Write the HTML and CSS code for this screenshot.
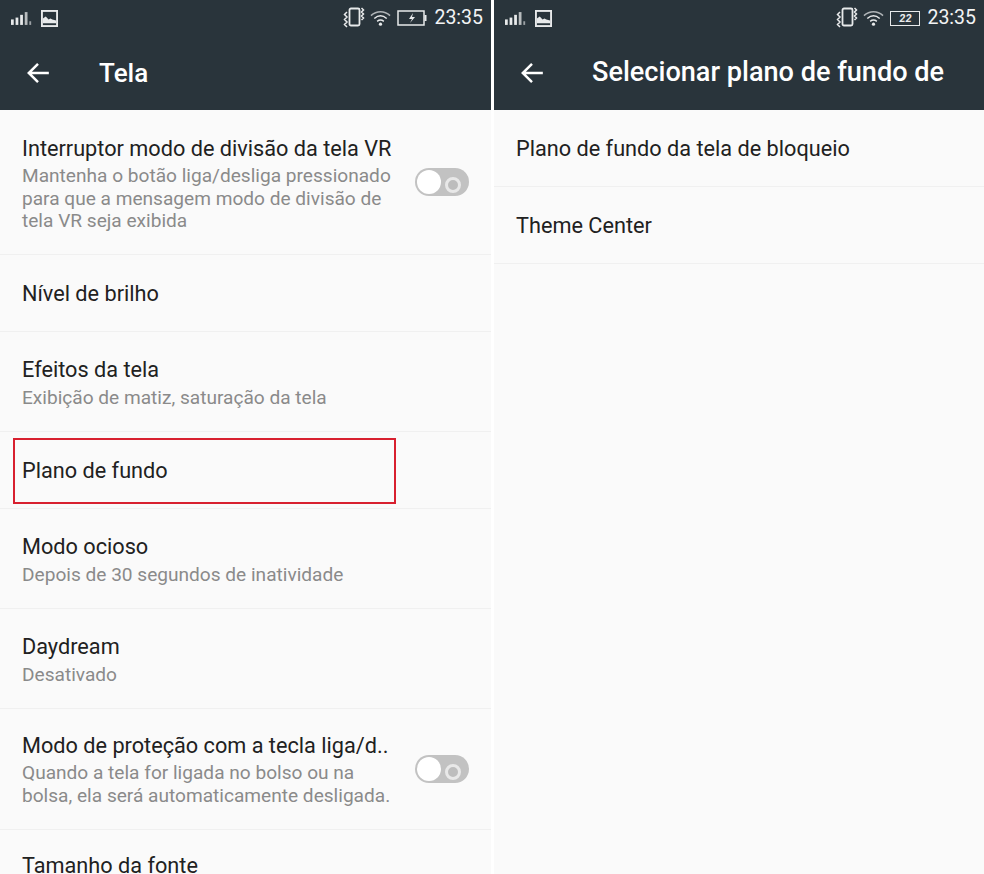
FILE: index.html
```html
<!DOCTYPE html>
<html lang="pt">
<head>
<meta charset="utf-8">
<title>Tela</title>
<link rel="stylesheet" href="styles.css">
</head>
<body>
<div class="screens">
  <section class="panel panel-left">
    <header class="appbar">
      <div class="status">
        <div class="status-left">
          <svg class="ic-signal" viewBox="0 0 24 14"><g fill="#e8eaeb"><rect x="0" y="8" width="3" height="6"/><rect x="5" y="6" width="3" height="8"/><rect x="10" y="3" width="3" height="11"/><rect x="15" y="0" width="3" height="14" opacity=".75"/><rect x="20" y="10" width="2" height="4" opacity=".6"/></g></svg>
          <svg class="ic-image" viewBox="0 0 18 18"><rect x="1" y="1" width="16" height="16" fill="none" stroke="#e8eaeb" stroke-width="2"/><path d="M2 14V9l3-2 3 3 2-1 2 1 4 1v3z" fill="#e8eaeb"/></svg>
        </div>
        <div class="status-right">
          <svg class="ic-vibrate" viewBox="0 0 22 22"><rect x="6.500" y="1.500" width="10" height="17" rx="1.500" fill="none" stroke="#e8eaeb" stroke-width="1.800"/><path d="M4 5L1.500 7.500 4 10l-2.500 2.500L4 15l-2.500 2.500L4 20M18.500 1l2 2-2 2 2 2-2 2 2 2-2 2" fill="none" stroke="#e8eaeb" stroke-width="1.500"/></svg>
          <svg class="ic-wifi" viewBox="0 0 22 18"><g fill="none" stroke="#e8eaeb" stroke-width="1.600"><path d="M1 6.500C7 1 15 1 21 6.500" opacity=".7"/><path d="M4.500 9.500c4-3.500 9-3.500 13 0"/><path d="M7.500 12.500c2-1.500 5-1.500 7 0"/></g><circle cx="11" cy="15.500" r="1.700" fill="#e8eaeb"/></svg>
          <svg class="ic-batt" viewBox="0 0 30 16"><rect x="1" y="1" width="26" height="14" fill="none" stroke="#e8eaeb" stroke-width="1.500"/><rect x="27.500" y="5" width="2" height="6" fill="#e8eaeb"/><path d="M16 3l-4 6h3l-2 4 5-6h-3l1-4z" fill="#e8eaeb"/></svg>
          <span class="clock">23:35</span>
        </div>
      </div>
      <div class="toolbar">
        <svg class="ic-back" viewBox="0 0 24 24"><path d="M22 12H4M12 3.500L3.500 12l8.500 8.500" fill="none" stroke="#fff" stroke-width="2.300"/></svg>
        <h1 class="title">Tela</h1>
      </div>
    </header>
    <div class="list">
      <div class="row row-vr">
        <div class="row-text">
          <div class="label">Interruptor modo de divisão da tela VR</div>
          <div class="sub">Mantenha o botão liga/desliga pressionado para que a mensagem modo de divisão de tela VR seja exibida</div>
        </div>
        <span class="switch"></span>
      </div>
      <div class="row row-single"><div class="label">Nível de brilho</div></div>
      <div class="row row-two">
        <div class="label">Efeitos da tela</div>
        <div class="sub">Exibição de matiz, saturação da tela</div>
      </div>
      <div class="row row-plano">
        <div class="label">Plano de fundo</div>
        <span class="highlight"></span>
      </div>
      <div class="row row-two">
        <div class="label">Modo ocioso</div>
        <div class="sub">Depois de 30 segundos de inatividade</div>
      </div>
      <div class="row row-two">
        <div class="label">Daydream</div>
        <div class="sub">Desativado</div>
      </div>
      <div class="row row-protect">
        <div class="row-text">
          <div class="label">Modo de proteção com a tecla liga/d..</div>
          <div class="sub">Quando a tela for ligada no bolso ou na bolsa, ela será automaticamente desligada.</div>
        </div>
        <span class="switch"></span>
      </div>
      <div class="row row-last"><div class="label">Tamanho da fonte</div></div>
    </div>
  </section>
  <section class="panel panel-right">
    <header class="appbar">
      <div class="status">
        <div class="status-left">
          <svg class="ic-signal" viewBox="0 0 24 14"><g fill="#e8eaeb"><rect x="0" y="8" width="3" height="6"/><rect x="5" y="6" width="3" height="8"/><rect x="10" y="3" width="3" height="11"/><rect x="15" y="0" width="3" height="14" opacity=".75"/><rect x="20" y="10" width="2" height="4" opacity=".6"/></g></svg>
          <svg class="ic-image" viewBox="0 0 18 18"><rect x="1" y="1" width="16" height="16" fill="none" stroke="#e8eaeb" stroke-width="2"/><path d="M2 14V9l3-2 3 3 2-1 2 1 4 1v3z" fill="#e8eaeb"/></svg>
        </div>
        <div class="status-right">
          <svg class="ic-vibrate" viewBox="0 0 22 22"><rect x="6.500" y="1.500" width="10" height="17" rx="1.500" fill="none" stroke="#e8eaeb" stroke-width="1.800"/><path d="M4 5L1.500 7.500 4 10l-2.500 2.500L4 15l-2.500 2.500L4 20M18.500 1l2 2-2 2 2 2-2 2 2 2-2 2" fill="none" stroke="#e8eaeb" stroke-width="1.500"/></svg>
          <svg class="ic-wifi" viewBox="0 0 22 18"><g fill="none" stroke="#e8eaeb" stroke-width="1.600"><path d="M1 6.500C7 1 15 1 21 6.500" opacity=".7"/><path d="M4.500 9.500c4-3.500 9-3.500 13 0"/><path d="M7.500 12.500c2-1.500 5-1.500 7 0"/></g><circle cx="11" cy="15.500" r="1.700" fill="#e8eaeb"/></svg>
          <span class="batt-num"><span class="batt-text">22</span></span>
          <span class="clock">23:35</span>
        </div>
      </div>
      <div class="toolbar">
        <svg class="ic-back" viewBox="0 0 24 24"><path d="M22 12H4M12 3.500L3.500 12l8.500 8.500" fill="none" stroke="#fff" stroke-width="2.300"/></svg>
        <h1 class="title">Selecionar plano de fundo de</h1>
      </div>
    </header>
    <div class="list">
      <div class="row row-single"><div class="label">Plano de fundo da tela de bloqueio</div></div>
      <div class="row row-single"><div class="label">Theme Center</div></div>
    </div>
  </section>
</div>
</body>
</html>
```
FILE: styles.css
```css
* { box-sizing: border-box; }
html, body { margin: 0; height: 100%; background: #fff; overflow: hidden; }
body { font-family: Roboto, "Noto Sans", sans-serif; color: #212121; }
.screens { display: flex; gap: 3px; height: 874px; }
.panel { background: #fafafa; overflow: hidden; }
.panel-left { width: 491px; }
.panel-right { width: 490px; flex: 1; }
.appbar { height: 110px; background: #29343b; color: #fff; }
.status { height: 36px; display: flex; justify-content: space-between; align-items: center; padding: 0 8px 0 11px; }
.status-left, .status-right { display: flex; align-items: center; }
.ic-signal { width: 22px; height: 13px; margin-right: 8px; }
.ic-image { width: 17px; height: 17px; }
.ic-vibrate { width: 22px; height: 22px; margin-right: 5px; }
.ic-wifi { width: 21px; height: 18px; margin-right: 6px; }
.ic-batt { width: 30px; height: 16px; margin-right: 7px; }
.batt-num { width: 30px; height: 15px; margin-right: 7px; border: 1.500px solid #e8eaeb; display: flex; align-items: center; justify-content: center; }
.batt-text { font-size: 11px; font-weight: 700; font-style: italic; color: #e8eaeb; line-height: 1; }
.clock { font-size: 19.500px; color: #f2f3f4; line-height: 1; }
.toolbar { height: 74px; display: flex; align-items: center; padding: 0 0 0 25px; }
.ic-back { width: 26px; height: 26px; flex: none; }
.title { margin: 0 0 0 48px; font-size: 27.100px; font-weight: 500; line-height: 1; white-space: nowrap; color: #fff; }
.panel-left .title { font-size: 26px; }
.panel-right .title { margin-left: 47px; }
.list { display: flex; flex-direction: column; }
.row { border-bottom: 1px solid #f0f0f0; padding: 0 22px; position: relative; }
.label { font-size: 21.700px; line-height: 28px; color: #212121; white-space: nowrap; }
.sub { font-size: 19.100px; line-height: 22.500px; color: #8a8a8a; }
.row-vr { height: 145px; padding-top: 25px; display: flex; align-items: flex-start; }
.row-text { width: 372px; flex: none; }
.row-text .sub { margin-top: 2px; }
.switch { width: 54px; height: 28px; border-radius: 14px; background: #c2c2c2; position: relative; flex: none; margin: 33px 0 0 21px; }
.switch::before { content: ""; position: absolute; left: 2px; top: 2px; width: 24px; height: 24px; border-radius: 50%; background: #fff; }
.switch::after { content: ""; position: absolute; right: 8px; top: 9px; width: 10px; height: 10px; border-radius: 50%; border: 3px solid #e8e8e8; background: #bdbdbd; }
.row-single { height: 77px; padding-top: 25px; }
.row-two { height: 100px; padding-top: 24px; }
.row-two .sub { margin-top: 3px; }
.row-plano { height: 77px; padding-top: 25px; }
.highlight { position: absolute; left: 13px; top: 6px; width: 383px; height: 66px; border: 2px solid #d8202f; }
.row-protect { height: 121px; padding-top: 23px; display: flex; align-items: flex-start; }
.row-protect .switch { margin-top: 23px; }
.row-last { height: 60px; padding-top: 22px; border-bottom: 0; }
```
